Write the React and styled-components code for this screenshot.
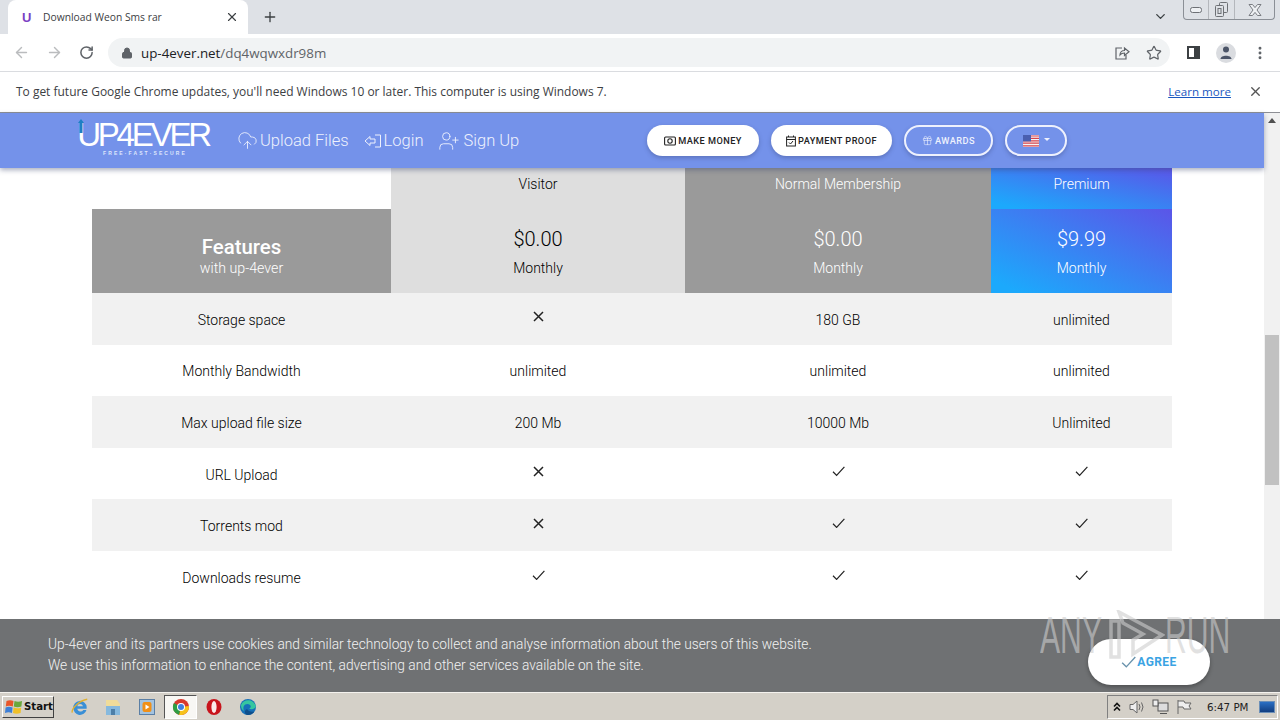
import React from "react";
import styled, { createGlobalStyle } from "styled-components";
import {
  ArrowLeft,
  ArrowRight,
  RotateCw,
  Lock,
  Star,
  X,
  Plus,
  ChevronDown,
  CloudUpload,
  UserPlus,
  Gift,
  MoreVertical,
} from "lucide-react";

const GlobalStyle = createGlobalStyle`
  html, body {
    margin: 0;
    padding: 0;
    width: 1280px;
    height: 720px;
    overflow: hidden;
    background: #fff;
    font-family: Roboto, "Liberation Sans", sans-serif;
  }
  * { box-sizing: border-box; }
`;

const Screen = styled.div`
  width: 1280px;
  height: 720px;
  display: flex;
  flex-direction: column;
  position: relative;
  overflow: hidden;
`;

/* browser chrome */
const TabStrip = styled.div`
  height: 34px;
  background: #dee1e6;
  display: flex;
  align-items: flex-end;
  padding-left: 8px;
`;
const Tab = styled.div`
  width: 240px;
  height: 34px;
  background: #fff;
  border-radius: 8px 8px 0 0;
  display: flex;
  align-items: center;
  padding: 0 9px 0 14px;
  color: #3c4043;
`;
const Favicon = styled.span`
  font: bold 13px "Liberation Sans", sans-serif;
  color: #7b3fc4;
  width: 21px;
`;
const TabTitle = styled.span`
  flex: 1;
  font-family: "Open Sans", sans-serif;
  font-size: 10.3px;
`;
const NewTab = styled.div`
  margin: 0 0 9px 14px;
  display: flex;
  color: #3c4043;
`;
const StripRight = styled.div`
  margin-left: auto;
  display: flex;
  align-items: flex-start;
  height: 34px;
`;
const TabMenu = styled.div`
  color: #3c4043;
  margin: 9px 15px 0 0;
`;
const WinButtons = styled.div`
  width: 92px;
  height: 20px;
  border: 1px solid #8b8f96;
  border-top: none;
  border-radius: 0 0 4px 4px;
  margin-right: 5px;
  display: flex;
  align-items: center;
  color: #777;
`;
const WinButton = styled.div`
  width: ${(p) => p.$w}px;
  height: 100%;
  display: flex;
  align-items: center;
  justify-content: center;
  border-right: ${(p) => (p.$last ? "none" : "1px solid #b4b7bc")};
`;
const Toolbar = styled.div`
  height: 38px;
  background: #fff;
  border-bottom: 1px solid #dadce0;
  display: flex;
  align-items: center;
  padding-left: 13px;
  color: #5f6368;
`;
const NavIcons = styled.div`
  display: flex;
  gap: 16px;
  align-items: center;
  width: 95px;
`;
const Omnibox = styled.div`
  width: 1062px;
  height: 29px;
  background: #f1f3f4;
  border-radius: 15px;
  display: flex;
  align-items: center;
  padding-left: 13px;
  font-family: "Open Sans", sans-serif;
  font-size: 13.35px;
`;
const UrlHost = styled.span`
  color: #202124;
  margin-left: 8px;
`;
const UrlPath = styled.span`
  color: #5f6368;
`;
const OmniRight = styled.div`
  margin-left: auto;
  display: flex;
  gap: 16px;
  align-items: center;
  padding-right: 8px;
`;
const ToolRight = styled.div`
  display: flex;
  align-items: center;
  margin-left: 17px;
  gap: 16px;
`;
const SidePanel = styled.div`
  width: 13px;
  height: 13px;
  border: 2px solid #3c4043;
  border-right-width: 6px;
`;
const Avatar = styled.div`
  width: 20px;
  height: 20px;
  border-radius: 50%;
  background: #dadce0;
  display: flex;
  align-items: center;
  justify-content: center;
`;
const InfoBar = styled.div`
  height: 41px;
  background: #fff;
  border-bottom: 1px solid #8d8f94;
  display: flex;
  align-items: center;
  padding: 0 17px 2px 16px;
  font-family: "Open Sans", sans-serif;
  font-size: 11.97px;
  color: #3c4043;
`;
const LearnMore = styled.a`
  margin-left: auto;
  color: #1a57c0;
  text-decoration: underline;
  font-size: 11.6px;
  margin-right: 17px;
`;
const InfoClose = styled.div`
  display: flex;
  color: #555;
`;

/* page */
const Viewport = styled.div`
  flex: 1;
  display: flex;
  position: relative;
  min-height: 0;
`;
const Page = styled.div`
  width: 1264px;
  display: flex;
  flex-direction: column;
  background: #fff;
`;
const Navbar = styled.div`
  height: 55px;
  background: #7492ea;
  box-shadow: 0 2px 5px rgba(60, 70, 110, 0.45);
  display: flex;
  align-items: center;
  padding-left: 78px;
  position: relative;
  z-index: 2;
  color: #fff;
`;
const Logo = styled.div`
  width: 134px;
  height: 44px;
  position: relative;
  display: flex;
  flex-direction: column;
  align-items: center;
  margin-top: -2px;
`;
const LogoWord = styled.div`
  font-family: "Liberation Sans", sans-serif;
  font-size: 33px;
  line-height: 30px;
  letter-spacing: -3.2px;
  margin-top: 2px;
  padding-right: 4px;
  color: #fff;
`;
const LogoTag = styled.div`
  font-family: "Liberation Sans", sans-serif;
  font-size: 5px;
  line-height: 6px;
  letter-spacing: 2.1px;
  font-weight: bold;
  color: #dfe6fb;
`;
const LogoArrow = styled.svg`
  position: absolute;
  left: 0;
  top: 1px;
`;
const NavLinks = styled.div`
  display: flex;
  align-items: center;
  margin-left: 25px;
  gap: 15px;
`;
const NavLink = styled.span`
  display: flex;
  align-items: center;
  gap: ${(p) => p.$gap || 2}px;
  font-size: 16.5px;
  font-weight: 300;
  color: #eef1fd;
`;
const Pills = styled.div`
  display: flex;
  align-items: center;
  gap: 12px;
  position: absolute;
  left: 647px;
  top: 12px;
`;
const Pill = styled.div`
  height: 31px;
  width: ${(p) => p.$w}px;
  border-radius: 16px;
  display: flex;
  align-items: center;
  justify-content: center;
  gap: 2px;
  font-size: 9.2px;
  font-weight: 500;
  letter-spacing: 0.45px;
  box-shadow: 0 2px 4px rgba(50, 60, 110, 0.35);
  background: ${(p) => (p.$outline ? "transparent" : "#fff")};
  color: ${(p) => (p.$outline ? "#eef1fd" : "#222")};
  border: ${(p) => (p.$outline ? "2px solid #eef1fd" : "none")};
`;
const Caret = styled.span`
  width: 0;
  height: 0;
  border-left: 3px solid transparent;
  border-right: 3px solid transparent;
  border-top: 3px solid #eef1fd;
  margin: 0 0 2px 3px;
`;

const Table = styled.div`
  width: 1080px;
  margin-left: 92px;
  display: grid;
  grid-template-columns: 299px 294px 306px 181px;
  grid-template-rows: 41px 84px;
  grid-auto-rows: 51.6px;
  font-size: 14px;
  font-weight: 300;
  color: #000;
`;
const HeadBlank = styled.div``;
const HeadCell = styled.div`
  display: flex;
  flex-direction: column;
  align-items: center;
  justify-content: center;
  color: ${(p) => (p.$tone === "light" ? "#000" : "#fff")};
  background: ${(p) =>
    p.$tone === "light"
      ? "#dedede"
      : p.$tone === "dark"
        ? "#9a9a9a"
        : "linear-gradient(to top right, #1ca9fc 8%, #5b55e8 100%)"};
`;
const PlanName = styled(HeadCell)`
  font-size: 14px;
  padding-bottom: 10px;
`;
const Price = styled.div`
  font-size: 20px;
  font-weight: 300;
  line-height: 24px;
  margin-top: 1px;
`;
const Period = styled.div`
  font-size: 14px;
  line-height: 18px;
  margin-top: 8px;
`;
const FeatTitle = styled.div`
  font-size: 20.4px;
  font-weight: 500;
  line-height: 24px;
  margin-top: 8px;
`;
const FeatSub = styled.div`
  font-size: 14.2px;
  font-weight: 300;
  line-height: 16px;
  margin-top: 1px;
`;
const Row = styled.div`
  display: contents;
`;
const Cell = styled.div`
  display: flex;
  align-items: center;
  justify-content: center;
  background: ${(p) => (p.$striped ? "#f1f1f1" : "#fff")};
  padding-top: 2px;
`;
const MarkCell = styled(Cell)`
  padding-top: 0;
  padding-bottom: 4px;
`;

/* overlays */
const Cookie = styled.div`
  position: absolute;
  left: 0;
  right: 0;
  bottom: 0;
  height: 73px;
  background: #6f7173;
  color: #f2f2f2;
  padding: 15px 0 0 48px;
  font-size: 13.75px;
  font-weight: 300;
  line-height: 21px;
  z-index: 3;
`;
const Agree = styled.div`
  position: absolute;
  left: 1088px;
  top: 20px;
  width: 122px;
  height: 46px;
  border-radius: 23px;
  background: #fff;
  color: #3aa3e3;
  font-size: 12px;
  font-weight: 700;
  letter-spacing: 0.4px;
  display: flex;
  align-items: center;
  justify-content: center;
  gap: 1px;
  box-shadow: 0 2px 4px rgba(0, 0, 0, 0.3);
`;
const Watermark = styled.div`
  position: absolute;
  left: 1040px;
  top: 497px;
  height: 50px;
  display: flex;
  align-items: center;
  z-index: 4;
  pointer-events: none;
`;
const WaterText = styled.span`
  display: block;
  width: ${(p) => p.$w}px;
  font-family: "Liberation Sans", sans-serif;
  font-size: 52px;
  line-height: 50px;
  color: rgba(205, 205, 205, 0.6);
  transform: scaleX(0.58);
  transform-origin: left center;
  white-space: nowrap;
`;
const WaterIcon = styled.svg`
  flex: none;
`;
const Scrollbar = styled.div`
  width: 16px;
  background: #f1f1f1;
  display: flex;
  flex-direction: column;
  align-items: center;
  position: relative;
  z-index: 1;
`;
const ScrollArrow = styled.span`
  width: 0;
  height: 0;
  border-left: 4px solid transparent;
  border-right: 4px solid transparent;
  ${(p) =>
    p.$down
      ? "border-top: 5px solid #505050; margin-top: auto; margin-bottom: 5px;"
      : "border-bottom: 5px solid #505050; margin-top: 5px;"}
`;
const ScrollThumb = styled.div`
  width: 14px;
  height: 150px;
  background: #c1c1c1;
  margin-top: 212px;
`;

/* taskbar */
const Taskbar = styled.div`
  height: 28px;
  background: #d4d0c8;
  border-top: 1px solid #f4f2ee;
  display: flex;
  align-items: center;
  padding-left: 2px;
  position: relative;
  z-index: 5;
`;
const StartButton = styled.div`
  width: 52px;
  height: 22px;
  display: flex;
  align-items: center;
  gap: 1px;
  padding-left: 2px;
  border: 1px solid #fff;
  border-right-color: #404040;
  border-bottom-color: #404040;
  font: bold 10.2px "DejaVu Sans", sans-serif;
  color: #111;
`;
const QuickIcons = styled.div`
  display: flex;
  align-items: center;
  margin-left: 9px;
`;
const QuickIcon = styled.div`
  width: 33.6px;
  height: 24px;
  display: flex;
  align-items: center;
  justify-content: center;
  ${(p) =>
    p.$active
      ? "background: #f8f7f4; border: 1px solid #555; border-right-color: #fff; border-bottom-color: #fff;"
      : ""}
`;
const Tray = styled.div`
  margin-left: auto;
  width: 171px;
  height: 24px;
  margin-right: 2px;
  border: 1px solid #808080;
  border-right-color: #fff;
  border-bottom-color: #fff;
  display: flex;
  align-items: center;
  padding-left: 4px;
  gap: 6px;
  font: 10.3px "DejaVu Sans", sans-serif;
  color: #222;
`;
const Clock = styled.span`
  margin-left: 9px;
  white-space: nowrap;
`;
const Desktop = styled.div`
  width: 16px;
  height: 12px;
  background: linear-gradient(#2a6fc4, #123e80);
  border: 1px solid #6b8fb8;
  margin-left: 4px;
`;

const Cross = () => (
  <svg width="11" height="11" viewBox="0 0 11 11" stroke="#222" strokeWidth="1.5" fill="none">
    <path d="M1 1 L10 10 M10 1 L1 10" />
  </svg>
);
const Tick = ({ color = "#222", size = 13 }) => (
  <svg width={size} height={size * 0.8} viewBox="0 0 13 10.4" stroke={color} strokeWidth="1.2" fill="none">
    <path d="M1 5.8 L4.6 9.4 L12.4 0.8" />
  </svg>
);

const rows = [
  ["Storage space", "x", "180 GB", "unlimited"],
  ["Monthly Bandwidth", "unlimited", "unlimited", "unlimited"],
  ["Max upload file size", "200 Mb", "10000 Mb", "Unlimited"],
  ["URL Upload", "x", "v", "v"],
  ["Torrents mod", "x", "v", "v"],
  ["Downloads resume", "v", "v", "v"],
];

const renderCell = (value, striped, key) => {
  if (value === "x") return <MarkCell key={key} $striped={striped}><Cross /></MarkCell>;
  if (value === "v") return <MarkCell key={key} $striped={striped}><Tick /></MarkCell>;
  return <Cell key={key} $striped={striped}>{value}</Cell>;
};

const LoginIcon = () => (
  <svg width="18" height="16" viewBox="0 0 18 16" fill="none" stroke="#eef1fd" strokeWidth="1">
    <path d="M1 8 L6 3.5 V6 H11 V10 H6 V12.5 Z" />
    <path d="M11 2 H16.5 V14 H11" />
  </svg>
);

const MoneyIcon = () => (
  <svg width="12" height="10" viewBox="0 0 12 10" fill="none" stroke="#222" strokeWidth="1.1">
    <rect x="0.6" y="1" width="10.8" height="8" rx="1" />
    <circle cx="6" cy="5" r="2.2" />
  </svg>
);

const CalendarIcon = () => (
  <svg width="10" height="12" viewBox="0 0 10 12" fill="none" stroke="#222" strokeWidth="1">
    <rect x="0.6" y="2" width="8.8" height="9" />
    <path d="M0.6 4.5 H9.4 M2.5 0.5 V2 M7.5 0.5 V2 M3 7.5 L4.5 9 L7 6" />
  </svg>
);

const UsFlag = () => (
  <svg width="16" height="12" viewBox="0 0 16 12">
    <rect width="16" height="12" fill="#f5f5f5" />
    <path d="M0 1 H16 M0 3.4 H16 M0 5.8 H16 M0 8.2 H16 M0 10.8 H16" stroke="#d8434b" strokeWidth="1.2" />
    <rect width="8" height="6.4" fill="#4a5fb0" />
  </svg>
);

const ShareIcon = () => (
  <svg width="16" height="16" viewBox="0 0 16 16" fill="none" stroke="#5f6368" strokeWidth="1.2">
    <path d="M8 3 H2 V14 H12 V10" />
    <path d="M6 10 C6 7 8 5.5 10.5 5.5 V3 L15 6.8 L10.5 10.5 V8 C8.5 8 7 8.6 6 10 Z" />
  </svg>
);

const MinimizeIcon = () => (
  <svg width="12" height="6" viewBox="0 0 12 6" fill="#eef0f3" stroke="#6d7075">
    <rect x="0.5" y="0.5" width="11" height="5" rx="2" />
  </svg>
);
const RestoreIcon = () => (
  <svg width="13" height="15" viewBox="0 0 13 15" fill="#dee1e6" stroke="#6d7075">
    <rect x="4.5" y="0.5" width="8" height="10" rx="1" />
    <rect x="0.5" y="3.5" width="8" height="11" rx="1" />
    <rect x="3" y="6.5" width="3" height="5" />
  </svg>
);
const CloseIcon = () => (
  <svg width="14" height="12" viewBox="0 0 14 12" fill="#eef0f3" stroke="#7a7d82">
    <path d="M1 0.5 H4.5 L7 3.6 L9.5 0.5 H13 L9 6 L13 11.5 H9.5 L7 8.4 L4.5 11.5 H1 L5 6 Z" />
  </svg>
);

const WinFlag = () => (
  <svg width="18" height="16" viewBox="0 0 18 16">
    <path d="M1.5 2 Q5 0.5 8.5 2 L7.8 7.5 Q4 6 0.8 7.4 Z" fill="#e8562a" />
    <path d="M9.5 2 Q13 3.5 17 2 L16.4 7.4 Q12.5 9 8.8 7.5 Z" fill="#6aa83c" />
    <path d="M0.6 8.4 Q4 7 7.6 8.6 L7 14 Q3.5 12.5 0 14 Z" fill="#3d7fd6" />
    <path d="M8.6 8.6 Q12.5 10 16.2 8.4 L15.6 14 Q11.5 15.4 8 14 Z" fill="#f0c028" />
  </svg>
);

const IeIcon = () => (
  <svg width="20" height="20" viewBox="0 0 18 18">
    <path d="M3 10 a6 6 0 0 1 12 -1 v1.5 H6.5 a3 3 0 0 0 5.5 1.2 h2.8 A6 6 0 0 1 3 10 Z M6.5 8.3 h5.2 a2.7 2.7 0 0 0 -5.2 0 Z" fill="#3a8fd6" fillRule="evenodd" />
    <path d="M2 14 C1 10 9 3 15.5 2" stroke="#e0b030" strokeWidth="1.2" fill="none" />
  </svg>
);

const FolderIcon = () => (
  <svg width="18" height="20" viewBox="0 0 18 20">
    <path d="M2 3 H13 L16 7 V18 H2 Z" fill="#f0dc9a" />
    <rect x="2" y="9" width="14" height="9" fill="#86b9de" />
    <rect x="7" y="12" width="4" height="6" fill="#4d7fa8" />
  </svg>
);

const MediaIcon = () => (
  <svg width="18" height="18" viewBox="0 0 18 18">
    <rect x="1.5" y="1.5" width="15" height="15" fill="#a3c3e0" stroke="#5b7fa5" />
    <rect x="4.5" y="4" width="9" height="10" rx="2" fill="#f09018" />
    <path d="M7.5 6.5 L11.5 9 L7.5 11.5 Z" fill="#fff" />
  </svg>
);

const ChromeIcon = () => (
  <svg width="18" height="18" viewBox="0 0 18 18">
    <circle cx="9" cy="9" r="8" fill="#d8382c" />
    <path d="M9 9 L16.9 8 A8 8 0 0 1 7 16.8 Z" fill="#f6c21c" />
    <path d="M9 9 L7 16.8 A8 8 0 0 1 2 5 Z" fill="#2f9e44" />
    <circle cx="9" cy="9" r="4" fill="#fff" />
    <circle cx="9" cy="9" r="3" fill="#3f7fe0" />
  </svg>
);

const OperaIcon = () => (
  <svg width="18" height="18" viewBox="0 0 18 18">
    <ellipse cx="9" cy="9" rx="7.5" ry="8" fill="#c8141c" />
    <ellipse cx="9" cy="9" rx="2.6" ry="6" fill="#fbeaea" />
  </svg>
);

const EdgeIcon = () => (
  <svg width="18" height="18" viewBox="0 0 18 18">
    <circle cx="9" cy="9" r="8" fill="#1670b8" />
    <path d="M2 7 C4 1 14 0 16.8 8 C17 11 12 12 10 10.5 C13 10 12 6 8.5 6 C5 6 3.5 9 5 13 C3 12 2 10 2 7 Z" fill="#36c6a0" />
    <path d="M7 16.5 C5 14 6 12 8 11 C9 13 12 14.5 15.5 13.5 C14 16 10 18 7 16.5 Z" fill="#0f4f8c" />
  </svg>
);

const TrayChevrons = () => (
  <svg width="10" height="10" viewBox="0 0 10 10" fill="none" stroke="#111" strokeWidth="1.6">
    <path d="M2 4.5 L5 1.5 L8 4.5 M2 8.5 L5 5.5 L8 8.5" />
  </svg>
);

const SpeakerIcon = () => (
  <svg width="18" height="16" viewBox="0 0 18 16" fill="none" stroke="#666" strokeWidth="1">
    <path d="M2 5.5 H5 L9 2 V14 L5 10.5 H2 Z" fill="#eee" />
    <path d="M11 5 Q13 8 11 11 M13.5 3.5 Q16.5 8 13.5 12.5" />
  </svg>
);

const NetworkIcon = () => (
  <svg width="18" height="16" viewBox="0 0 18 16" fill="none" stroke="#555" strokeWidth="1">
    <rect x="6" y="4" width="10" height="8" fill="#ddd" />
    <rect x="1" y="1" width="5" height="6" fill="#eee" />
    <path d="M8 14.5 H15" />
  </svg>
);

const FlagIcon = () => (
  <svg width="16" height="16" viewBox="0 0 16 16" fill="none" stroke="#666" strokeWidth="1">
    <path d="M2 1 V15 M2 2 H8 L9 4 H15 L13 7 L15 10 H8 L7 8 H2" fill="#eee" />
  </svg>
);

const App = () => (
  <Screen>
    <GlobalStyle />
    <TabStrip>
      <Tab>
        <Favicon>U</Favicon>
        <TabTitle>Download Weon Sms rar</TabTitle>
        <X size={14} strokeWidth={2} color="#3c4043" />
      </Tab>
      <NewTab>
        <Plus size={16} strokeWidth={2} />
      </NewTab>
      <StripRight>
        <TabMenu>
          <ChevronDown size={15} strokeWidth={2.2} />
        </TabMenu>
        <WinButtons>
          <WinButton $w={25}><MinimizeIcon /></WinButton>
          <WinButton $w={26}><RestoreIcon /></WinButton>
          <WinButton $w={39} $last><CloseIcon /></WinButton>
        </WinButtons>
      </StripRight>
    </TabStrip>
    <Toolbar>
      <NavIcons>
        <ArrowLeft size={17} color="#babcbe" strokeWidth={2} />
        <ArrowRight size={17} color="#babcbe" strokeWidth={2} />
        <RotateCw size={15} color="#5f6368" strokeWidth={2.4} />
      </NavIcons>
      <Omnibox>
        <Lock size={12} fill="#5f6368" color="#5f6368" />
        <UrlHost>up-4ever.net</UrlHost>
        <UrlPath>/dq4wqwxdr98m</UrlPath>
        <OmniRight>
          <ShareIcon />
          <Star size={16} color="#5f6368" strokeWidth={1.8} />
        </OmniRight>
      </Omnibox>
      <ToolRight>
        <SidePanel />
        <Avatar>
          <svg width="12" height="13" viewBox="0 0 12 13" fill="#4b5467">
            <circle cx="6" cy="3.4" r="3" />
            <path d="M0.5 13 C0.5 8.5 11.5 8.5 11.5 13 Z" />
          </svg>
        </Avatar>
        <MoreVertical size={16} color="#5f6368" strokeWidth={2.4} />
      </ToolRight>
    </Toolbar>
    <InfoBar>
      To get future Google Chrome updates, you'll need Windows 10 or later. This computer is using Windows 7.
      <LearnMore>Learn more</LearnMore>
      <InfoClose>
        <X size={15} strokeWidth={2.2} />
      </InfoClose>
    </InfoBar>
    <Viewport>
      <Page>
        <Navbar>
          <Logo>
            <LogoArrow width="6" height="14" viewBox="0 0 6 14" fill="#1d7fc4">
              <path d="M3 0 L6 4 H4.5 V14 H1.5 V4 H0 Z" />
            </LogoArrow>
            <LogoWord>UP4EVER</LogoWord>
            <LogoTag>FREE·FAST·SECURE</LogoTag>
          </Logo>
          <NavLinks>
            <NavLink>
              <CloudUpload size={21} strokeWidth={1} />
              Upload Files
            </NavLink>
            <NavLink>
              <LoginIcon />
              Login
            </NavLink>
            <NavLink $gap={3}>
              <UserPlus size={22} strokeWidth={1} />
              Sign Up
            </NavLink>
          </NavLinks>
          <Pills>
            <Pill $w={112}>
              <MoneyIcon />
              MAKE MONEY
            </Pill>
            <Pill $w={121}>
              <CalendarIcon />
              PAYMENT PROOF
            </Pill>
            <Pill $w={89} $outline>
              <Gift size={11} strokeWidth={1.3} />
              AWARDS
            </Pill>
            <Pill $w={62} $outline>
              <UsFlag />
              <Caret />
            </Pill>
          </Pills>
        </Navbar>
        <Table>
          <HeadBlank />
          <PlanName $tone="light">Visitor</PlanName>
          <PlanName $tone="dark">Normal Membership</PlanName>
          <PlanName $tone="premium">Premium</PlanName>

          <HeadCell $tone="dark">
            <FeatTitle>Features</FeatTitle>
            <FeatSub>with up-4ever</FeatSub>
          </HeadCell>
          <HeadCell $tone="light">
            <Price>$0.00</Price>
            <Period>Monthly</Period>
          </HeadCell>
          <HeadCell $tone="dark">
            <Price>$0.00</Price>
            <Period>Monthly</Period>
          </HeadCell>
          <HeadCell $tone="premium">
            <Price>$9.99</Price>
            <Period>Monthly</Period>
          </HeadCell>

          {rows.map((row, i) => (
            <Row key={row[0]}>
              <Cell $striped={i % 2 === 0}>{row[0]}</Cell>
              {row.slice(1).map((value, j) => renderCell(value, i % 2 === 0, j))}
            </Row>
          ))}
        </Table>
      </Page>
      <Scrollbar>
        <ScrollArrow />
        <ScrollThumb />
        <ScrollArrow $down />
      </Scrollbar>
      <Cookie>
        Up-4ever and its partners use cookies and similar technology to collect and analyse information about the users of this website.
        <br />
        We use this information to enhance the content, advertising and other services available on the site.
        <Agree>
          <Tick color="#6a93ad" size={15} />
          AGREE
        </Agree>
      </Cookie>
      <Watermark>
        <WaterText $w={69}>ANY</WaterText>
        <WaterIcon width="56" height="50" viewBox="0 0 56 50" fill="none" stroke="rgba(205,205,205,0.6)" strokeWidth="3.5">
          <path d="M2 11 H10 V47 H2 Z" />
          <path d="M10 2 L53 25 L24 44 V30 L34 24 L14 13 Z" />
        </WaterIcon>
        <WaterText $w={62}>RUN</WaterText>
      </Watermark>
    </Viewport>
    <Taskbar>
      <StartButton>
        <WinFlag />
        Start
      </StartButton>
      <QuickIcons>
        <QuickIcon><IeIcon /></QuickIcon>
        <QuickIcon><FolderIcon /></QuickIcon>
        <QuickIcon><MediaIcon /></QuickIcon>
        <QuickIcon $active><ChromeIcon /></QuickIcon>
        <QuickIcon><OperaIcon /></QuickIcon>
        <QuickIcon><EdgeIcon /></QuickIcon>
      </QuickIcons>
      <Tray>
        <TrayChevrons />
        <SpeakerIcon />
        <NetworkIcon />
        <FlagIcon />
        <Clock>6:47 PM</Clock>
        <Desktop />
      </Tray>
    </Taskbar>
  </Screen>
);

export default App;
